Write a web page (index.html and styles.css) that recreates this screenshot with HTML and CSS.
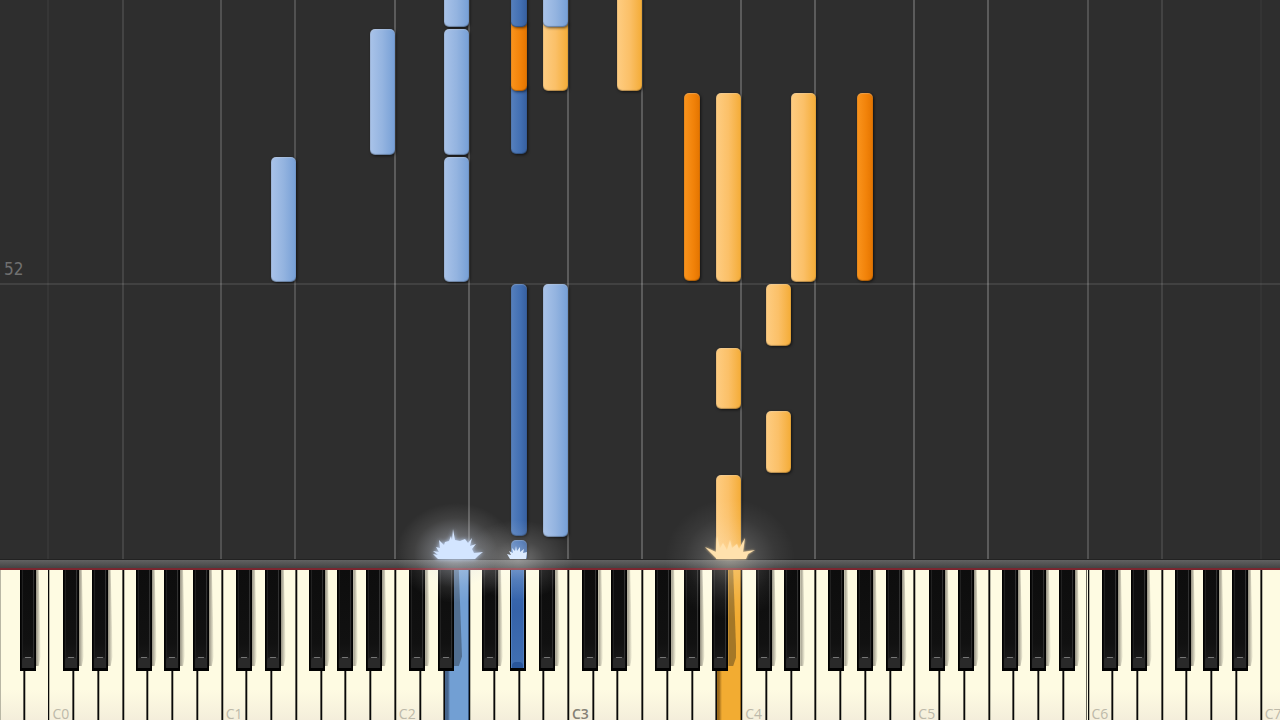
FILE: index.html
```html
<!DOCTYPE html>
<html lang="en">
<head>
<meta charset="utf-8">
<title>Piano roll</title>
<link rel="stylesheet" href="styles.css">
</head>
<body>
<main class="stage">
  <section class="roll" id="roll" aria-label="Falling notes">
    <div class="measure"><span class="measure-number">52</span></div>
  </section>
  <div class="deck">
    <div class="rail"></div>
    <section class="keyboard" aria-label="Keyboard"><div class="keys" id="keys"></div></section>
    <div class="glow glow-blue"></div>
    <div class="glow glow-small"></div>
    <div class="glow glow-gold"></div>
    <svg class="burst burst-blue" viewBox="0 0 54 34" aria-hidden="true">
      <path d="M7 33L2 28L7 29L2 25L8 26L5 21L9 22L8 14L13 19L14 16L18 15L20 10L21 14L22 3L24 14L29 15L34 13L37 17L41 12L39 20L45 18L41 23L43 27L52 26L47 30L44 33Z" fill="#d3e5ff"/>
    </svg>
    <svg class="burst burst-small" viewBox="0 0 22 20" aria-hidden="true">
      <path d="M4 19L1 14L5 15L3 11L7 13L6 8L9 11L10 6L11 11L14 7L14 12L18 9L17 13L21 12L20 19Z" fill="#dcebff"/>
    </svg>
    <svg class="burst burst-gold" viewBox="0 0 54 34" aria-hidden="true">
      <path d="M14 33L9 28L2 21L13 26L14 10L17 22L20 17L24 24L27 14L29 22L34 18L36 23L42 12L40 26L52 24L45 28L43 33Z" fill="#ffe1ad"/>
    </svg>
  </div>
</main>
<script src="script.js"></script>
</body>
</html>
```
FILE: styles.css
```css
* { box-sizing: border-box; }

body {
  margin: 0;
  background: #2e2e2e;
  font-family: "Open Sans", "Noto Sans", sans-serif;
}

.stage {
  display: flex;
  flex-direction: column;
  height: 100vh;
  overflow: hidden;
}

/* Falling notes */
.roll {
  position: relative;
  flex: 1;
  overflow: hidden;
  background: #2e2e2e;
}

.lane {
  position: absolute;
  top: 0;
  bottom: 0;
  width: 2px;
  background: #fff;
}

.measure {
  position: absolute;
  left: 0;
  right: 0;
  bottom: 49%;
  border-bottom: 2px solid #414141;
}

.measure-number {
  display: block;
  padding: 0 4px;
  color: #707070;
  font-family: "DejaVu Sans Condensed", "Open Sans", sans-serif;
  font-size: 17px;
  line-height: 28px;
}

.note {
  position: absolute;
  border-radius: 5px;
  box-shadow: inset 0 1px 1px rgba(255, 255, 255, .25), inset 0 -1px 1px rgba(0, 0, 0, .25), inset 0 0 1px rgba(0, 0, 0, .5), 1px 1px 3px rgba(0, 0, 0, .6);
}

.note-white { width: 1.95%; }
.note-black { width: 1.25%; }
.left.note-white { background: linear-gradient(90deg, #a9c3e9, #94b4e0 50%, #769fd6); }
.left.note-black { background: linear-gradient(90deg, #5680bd, #426fb2 60%, #365f9f); }
.right.note-white { background: linear-gradient(90deg, #fecd82, #fbc068 50%, #f4ac37); }
.right.note-black { background: linear-gradient(90deg, #fa941d, #f18209 60%, #e37400); }

/* Rail and keyboard */
.deck { position: relative; }

.rail {
  height: 11px;
  border-top: 1px solid #222;
  border-bottom: 2px solid #7b2630;
  background: linear-gradient(#626262, #444);
}

.keyboard {
  height: 150px;
  overflow: hidden;
  background: #fefbe2;
}

.keys {
  display: flex;
  width: 100.5%;
  height: 100%;
  margin-left: -1px;
}

.octave {
  position: relative;
  display: flex;
}

.key {
  flex: 1 1 0;
  display: flex;
  align-items: flex-end;
  min-width: 0;
  margin: 0;
  padding: 0 0 0 3px;
  border: 0;
  border-left: 1px solid #080808;
  background: linear-gradient(#fefbe2 80%, #f4eedb);
  box-shadow: inset 1px 0 #b9b7a5, inset -1px 0 #66645a;
  color: #bdb9a9;
  font: 14px/12px "Open Sans", "Noto Sans", sans-serif;
  white-space: nowrap;
}

.key.middle {
  color: #858175;
  font-weight: 600;
}

.key.pressed-left {
  background: linear-gradient(90deg, #46658c 3px, #729fd3 5px);
  box-shadow: inset -1px 0 #35557f;
}

.key.pressed-right {
  background: linear-gradient(90deg, #9c6a1a 2px, #f2ac32 5px);
  box-shadow: inset -1px 0 #996716;
}

.sharp {
  position: absolute;
  top: 0;
  height: 101px;
  padding: 0;
  border: solid #020202;
  border-width: 0 1px 3px 1px;
  background: linear-gradient(#0d0d0d, #111 75%, #1c1c1c);
  box-shadow: inset 1px 0 #0a0a0a, inset 2px 0 #202020, inset -1px 0 #0a0a0a, inset -2px 0 #303030;
}

/* Shadow that the raised key throws on the white key to its right */
.sharp::before {
  content: "";
  position: absolute;
  top: 0;
  left: 100%;
  width: 5px;
  height: 96px;
  margin-left: 1px;
  background: linear-gradient(90deg, rgba(40, 35, 30, .5), rgba(40, 35, 30, 0));
  clip-path: polygon(0 0, 60% 0, 100% 90%, 60% 100%, 0 100%);
}

.sharp.deep::before {
  width: 8px;
  background: rgba(20, 20, 20, .35);
}

.sharp::after {
  content: "";
  position: absolute;
  right: 1px;
  bottom: 0;
  left: 1px;
  height: 11px;
  border-radius: 4px 4px 0 0;
  background: linear-gradient(#777, #777) 50% 0 / 6px 1px no-repeat, #292929;
}

.sharp.pressed-left {
  border-width: 0 2px 3px 1px;
  background: linear-gradient(#3e6fb6, #3562a9 40%, #4170b3);
  box-shadow: inset 1px 0 #4e7dbd, inset -1px 0 #4e7dbd;
}

.sharp.pressed-left::before { display: none; }

.sharp.pressed-left::after {
  height: 6px;
  background: #29569b;
}

/* Light where a note strikes */
.glow {
  position: absolute;
  pointer-events: none;
  border-radius: 50%;
  transform: translate(-50%, -50%);
}

.glow-blue {
  top: -6px;
  left: 35.6%;
  width: 120px;
  height: 100px;
  background: radial-gradient(closest-side, rgba(235, 240, 250, .55), rgba(225, 230, 240, .3) 40%, rgba(255, 255, 255, .09) 70%, transparent);
}

.glow-small {
  top: 1px;
  left: 40.5%;
  width: 110px;
  height: 80px;
  background: radial-gradient(closest-side, rgba(255, 255, 255, .35), rgba(255, 255, 255, .12) 50%, transparent);
}

.glow-gold {
  top: 0;
  left: 57%;
  width: 130px;
  height: 120px;
  background: radial-gradient(closest-side, rgba(255, 246, 228, .35), rgba(255, 255, 255, .13) 45%, rgba(255, 255, 255, .05) 70%, transparent);
}

.burst {
  position: absolute;
  bottom: 160px;
  pointer-events: none;
}

.burst-blue { left: 33.7%; width: 54px; height: 34px; filter: drop-shadow(0 0 2px #b9d0f5); }
.burst-small { left: 39.5%; width: 22px; height: 20px; }
.burst-gold { left: 54.9%; width: 54px; height: 34px; filter: drop-shadow(0 0 1px #ffd999); }
```
FILE: script.js
```js
const WIDTH = 1280;
const HEIGHT = 559;
const roll = document.getElementById("roll");
const keys = document.getElementById("keys");
const percent = (value, total) => (value / total) * 100 + "%";

// Lanes: x position and strength
const lanes = [
  [47, .04], [122, .11], [220, .17], [294, .17], [394, .22], [468, .22], [567, .22], [641, .22],
  [740, .22], [814, .22], [913, .22], [987, .22], [1087, .17], [1161, .1], [1260, .03]
];
for (const [x, strength] of lanes) {
  const lane = document.createElement("div");
  lane.className = "lane";
  lane.style.left = percent(x, WIDTH);
  lane.style.opacity = strength;
  roll.append(lane);
}

// Notes: hand, key colour, x, start, end
const notes = [
  ["left", "white", 444, -10, 27], ["left", "white", 444, 29, 155], ["left", "white", 444, 157, 282],
  ["left", "white", 370, 29, 155], ["left", "white", 271, 157, 282],
  ["left", "white", 543, 284, 537],
  ["left", "black", 511, 84, 154], ["right", "black", 511, 20, 91], ["left", "black", 511, -10, 27],
  ["left", "black", 511, 284, 536], ["left", "black", 511, 540, 562],
  ["right", "white", 543, 20, 91], ["left", "white", 543, -10, 27],
  ["right", "white", 617, -10, 91],
  ["right", "black", 684, 93, 281], ["right", "black", 857, 93, 281],
  ["right", "white", 716, 93, 282], ["right", "white", 791, 93, 282],
  ["right", "white", 766, 284, 346], ["right", "white", 716, 348, 409],
  ["right", "white", 766, 411, 473], ["right", "white", 716, 475, 565]
];
for (const [hand, colour, x, start, end] of notes) {
  const note = document.createElement("div");
  note.className = `note note-${colour} ${hand}`;
  note.style.left = percent(x, WIDTH);
  note.style.top = percent(start, HEIGHT);
  note.style.height = percent(end - start, HEIGHT);
  roll.append(note);
}

// Keyboard from A to C7, grouped by octave
const KEY = 24.74;
const sharps = { "C#": 14.4, "D#": 43.2, "F#": 87.2, "G#": 115.6, "A#": 144.4 };
const pressed = { E2: "pressed-left", "G#2": "pressed-left", B3: "pressed-right" };
const deep = ["D#2", "A#3"];

function addOctave(number, whites, blacks, offset) {
  const octave = document.createElement("div");
  octave.className = "octave";
  octave.style.flex = whites.length;
  for (const name of whites) {
    const key = document.createElement("button");
    const id = name + number;
    key.type = "button";
    key.className = "key " + (pressed[id] || "");
    key.setAttribute("aria-label", id);
    if (name === "C") key.textContent = id;
    if (id === "C3") key.classList.add("middle");
    octave.append(key);
  }
  const width = whites.length * KEY;
  for (const name of blacks) {
    const key = document.createElement("button");
    const id = name + number;
    key.type = "button";
    key.className = "sharp " + (pressed[id] || "") + (deep.includes(id) ? " deep" : "");
    key.setAttribute("aria-label", id);
    key.style.left = percent(sharps[name] - offset, width);
    key.style.width = percent(16, width);
    octave.append(key);
  }
  keys.append(octave);
}

addOctave(-1, ["A", "B"], ["A#"], 5 * KEY);
for (let n = 0; n < 7; n++) addOctave(n, [..."CDEFGAB"], Object.keys(sharps), 0);
addOctave(7, ["C"], [], 0);
```
